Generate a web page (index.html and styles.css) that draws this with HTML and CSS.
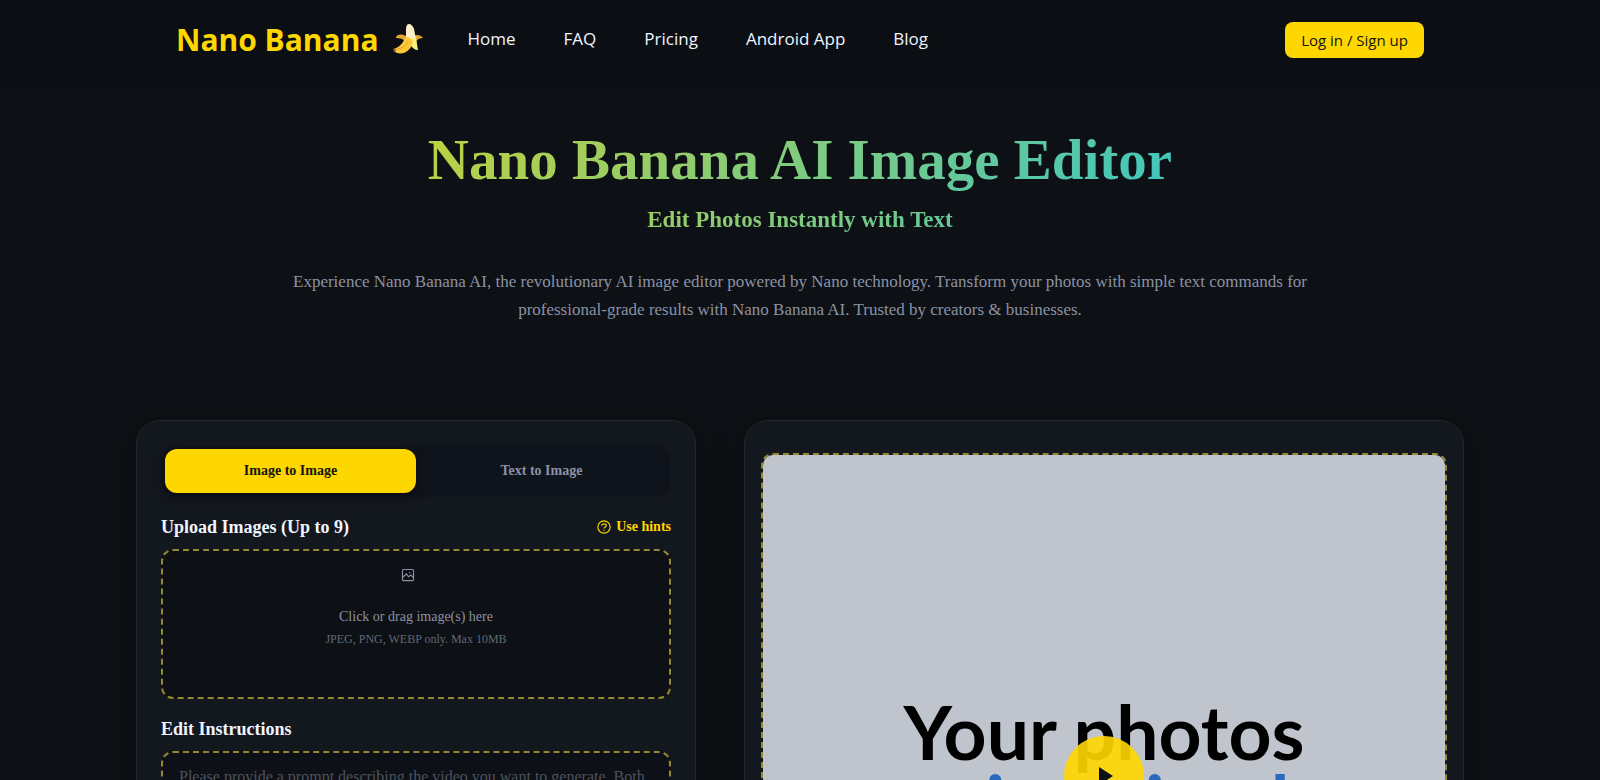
FILE: index.html
```html
<!DOCTYPE html>
<html lang="en">
  <head>
    <meta charset="UTF-8" />
    <meta name="viewport" content="width=device-width, initial-scale=1.0" />
    <title>Nano Banana AI Image Editor</title>
    <link rel="stylesheet" href="styles.css">
  </head>
  <body>
    <header class="site-header">
      <div class="header-inner">
        <a class="logo" href="#">
          Nano Banana
          <svg class="logo-icon" viewBox="0 0 30 30" aria-hidden="true">
            <path d="M3 13c2-3 6-3 10-1l-1 5c-2-2-5-3-9-3z" fill="#e3a336" />
            <path d="M20 12c4-2 8-1 10 2-3 0-5 1-7 3z" fill="#e3a336" />
            <path d="M13 14V5c0-3 1-5 3-5s4 2 5 5l2 10-5 6z" fill="#fdeec6" />
            <path d="M13 13c3 0 6 2 10 1 1 4 1 8 2 12-3 0-6-2-8-6z" fill="#fff07a" />
            <path d="M12 13c4 0 8 3 8 6-3 7-8 12-16 10-2-1-3-2-3-4 4-2 9-4 11-12z" fill="#fdc93b" />
            <path d="M15 17c-1 5-6 8-13 8" fill="none" stroke="#e8a62f" stroke-width="1" />
            <path d="M0 25l2-1 1 3-2 1z" fill="#80603a" />
          </svg>
        </a>
        <nav class="nav">
          <a href="#">Home</a>
          <a href="#">FAQ</a>
          <a href="#">Pricing</a>
          <a href="#">Android App</a>
          <a href="#">Blog</a>
        </nav>
        <button class="login-btn" type="button">Log in / Sign up</button>
      </div>
    </header>

    <main>
      <section class="hero">
        <h1>Nano Banana AI Image Editor</h1>
        <h2>Edit Photos Instantly with Text</h2>
        <p>
          Experience Nano Banana AI, the revolutionary AI image editor powered by Nano technology. Transform your photos with simple text commands for professional-grade results with Nano Banana AI. Trusted by creators &amp; businesses.
        </p>
      </section>

      <section class="editor">
        <div class="card form-card">
          <div class="tabs">
            <button class="tab active" type="button">Image to Image</button>
            <button class="tab" type="button">Text to Image</button>
          </div>

          <div class="field-head">
            <label for="upload">Upload Images (Up to 9)</label>
            <button class="hints" type="button">
              <svg viewBox="0 0 24 24" aria-hidden="true">
                <circle cx="12" cy="12" r="10.5" />
                <path d="M8 10c0-2 1.700-3.500 4-3.500s4 1.300 4 3c0 2.300-4 2.500-4 5M12 16.500v2" />
              </svg>
              Use hints
            </button>
          </div>
          <label class="dropzone" for="upload">
            <input id="upload" type="file" accept="image/*" multiple />
            <svg class="picture-icon" viewBox="0 0 24 24" aria-hidden="true">
              <rect x="2.500" y="2.500" width="19" height="19" rx="2" />
              <path d="M3 16l6-6 4 5 4-3 4 4M14 8h2" />
            </svg>
            <span class="drop-text">Click or drag image(s) here</span>
            <span class="drop-note">JPEG, PNG, WEBP only. Max 10MB</span>
          </label>

          <div class="field-head">
            <label for="prompt">Edit Instructions</label>
          </div>
          <textarea id="prompt" class="prompt" placeholder="Please provide a prompt describing the video you want to generate. Both English and Chinese are supported."></textarea>
        </div>

        <div class="card preview-card">
          <div class="preview">
            <div class="video">
              <p class="video-text">Your photos<br /><span>reimagined</span></p>
              <button class="play" type="button" aria-label="Play video">
                <svg viewBox="0 0 14 18" aria-hidden="true"><path d="M0 0l14 9-14 9z" /></svg>
              </button>
            </div>
          </div>
        </div>
      </section>
    </main>
  </body>
</html>
```

FILE: styles.css
```css
* {
  box-sizing: border-box;
}

body {
  margin: 0;
  background-color: #0d1014;
  color: #f0f4ff;
  font-family: "Liberation Serif", "Times New Roman", serif;
}

button {
  border: none;
  cursor: pointer;
}

.site-header {
  padding-bottom: 8px;
  background-color: #0b0f14;
  font-family: "Open Sans", sans-serif;
}

.header-inner {
  display: flex;
  align-items: center;
  max-width: 1280px;
  height: 80px;
  margin: 0 auto;
  padding: 0 16px;
}

.logo {
  display: flex;
  align-items: center;
  gap: 14px;
  padding-bottom: 2px;
  color: #ffd700;
  font-size: 30px;
  font-weight: 700;
  text-decoration: none;
}

.logo-icon {
  width: 30px;
  height: 30px;
}

.nav {
  display: flex;
  gap: 48px;
  margin-left: 45px;
  padding-bottom: 4px;
}

.nav a {
  color: #f0f4ff;
  font-size: 17px;
  font-weight: 500;
  text-decoration: none;
}

.login-btn {
  height: 36px;
  margin-left: auto;
  padding: 0 16px;
  border-radius: 8px;
  background-color: #ffd700;
  color: #14140a;
  font-family: inherit;
  font-size: 15px;
}

.hero {
  padding: 36px 32px 88px;
  text-align: center;
}

.hero h1,
.hero h2 {
  margin: 0;
  background: linear-gradient(135deg, #ffd700, #00bfff);
  -webkit-background-clip: text;
  background-clip: text;
  color: transparent;
}

.hero h1 {
  font-size: 57px;
  line-height: 72px;
}

.hero h2 {
  margin-top: 8px;
  font-size: 23px;
  line-height: 32px;
}

.hero p {
  max-width: 1040px;
  margin: 32px auto 0;
  color: #8b92a5;
  font-size: 17px;
  line-height: 28px;
}

.editor {
  display: grid;
  grid-template-columns: 7fr 9fr;
  gap: 48px;
  max-width: 1328px;
  margin: 8px auto 0;
}

.card {
  border: 1px solid #22262d;
  border-radius: 24px;
  background-color: #13171e;
  box-shadow: 0 8px 32px rgba(0, 0, 0, 0.3);
}

.form-card {
  padding: 24px;
}

.tabs {
  display: flex;
  padding: 4px;
  border-radius: 16px;
  background-color: #0f131b;
}

.tab {
  flex: 1;
  height: 44px;
  border-radius: 12px;
  background-color: transparent;
  color: #8b92a5;
  font-family: inherit;
  font-size: 14px;
  font-weight: 700;
}

.tab.active {
  background-color: #ffd700;
  color: #14140a;
  box-shadow: 0 4px 12px rgba(0, 0, 0, 0.4);
}

.field-head {
  display: flex;
  align-items: center;
  justify-content: space-between;
  margin: 20px 0 12px;
  font-size: 18px;
  font-weight: 700;
  line-height: 20px;
}

.hints {
  display: flex;
  align-items: center;
  gap: 5px;
  padding: 0;
  background: none;
  color: #ffd700;
  font-family: inherit;
  font-size: 14px;
  font-weight: 700;
}

.hints svg,
.picture-icon {
  width: 14px;
  height: 14px;
  fill: none;
  stroke: currentColor;
  stroke-width: 2;
}

.dropzone {
  display: flex;
  flex-direction: column;
  align-items: center;
  height: 150px;
  padding-top: 17px;
  border: 2px dashed #94872f;
  border-radius: 12px;
  background-color: #0d1014;
  color: #8b92a5;
  cursor: pointer;
}

.dropzone input {
  position: absolute;
  width: 1px;
  height: 1px;
  opacity: 0;
}

.picture-icon {
  margin-right: 16px;
}

.drop-text {
  margin-top: 24px;
  font-size: 14px;
  line-height: 22px;
}

.drop-note {
  margin-top: 2px;
  color: #626875;
  font-size: 12px;
  line-height: 18px;
}

.prompt {
  display: block;
  width: 100%;
  height: 150px;
  padding: 12px 16px;
  border: 2px dashed #94872f;
  border-radius: 12px;
  background-color: #0d1016;
  color: #f0f4ff;
  font-family: inherit;
  font-size: 16px;
  line-height: 24px;
  resize: none;
}

.prompt::placeholder {
  color: #4d525c;
}

.preview-card {
  padding: 32px 16px;
}

.preview {
  border: 2px dashed #94872f;
  border-radius: 12px;
}

.video {
  position: relative;
  display: flex;
  align-items: center;
  justify-content: center;
  aspect-ratio: 17 / 16;
  border-radius: 10px;
  background-color: #c0c4cd;
}

.video-text {
  margin: 0;
  padding-bottom: 20px;
  color: #000;
  font-family: Lato, sans-serif;
  font-size: 75px;
  font-weight: 700;
  line-height: 70px;
  text-align: center;
}

.video-text span {
  color: #2b68c0;
}

.play {
  position: absolute;
  top: 50%;
  left: 50%;
  display: flex;
  align-items: center;
  justify-content: center;
  width: 80px;
  height: 80px;
  padding: 0 0 0 4px;
  border-radius: 50%;
  background-color: rgba(255, 215, 0, 0.9);
  transform: translate(-50%, -50%);
}

.play svg {
  width: 14px;
  height: 18px;
  fill: #0d1014;
}
```
